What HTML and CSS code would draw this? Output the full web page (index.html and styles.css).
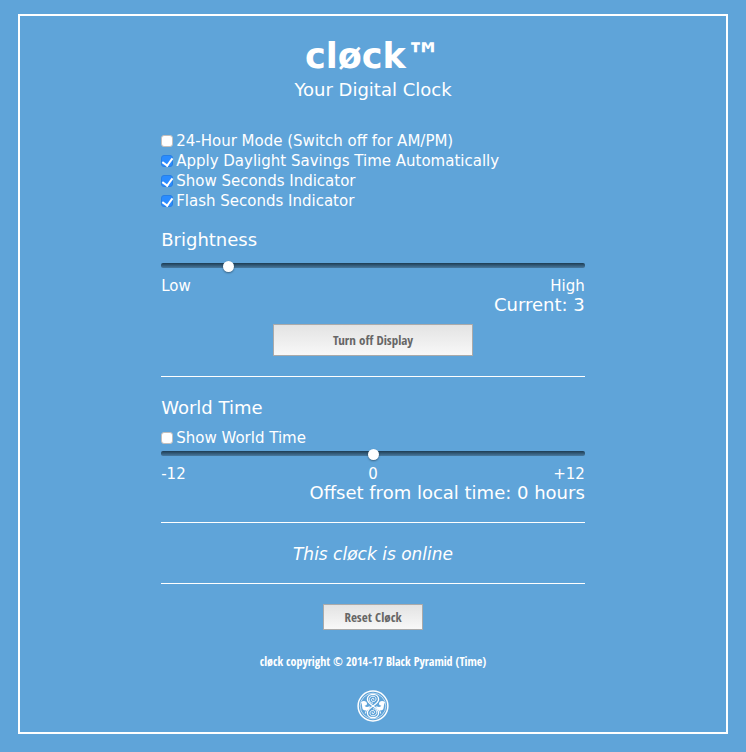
FILE: index.html
```html
<!DOCTYPE html>
<html lang="en">
<head>
<meta charset="utf-8">
<meta name="viewport" content="width=device-width, initial-scale=1">
<title>cløck</title>
<link rel="stylesheet" href="styles.css">
</head>
<body>
<main class="frame">
  <div class="panel">
    <header class="header">
      <h1 class="title">cløck™</h1>
      <p class="subtitle">Your Digital Clock</p>
    </header>
    <section class="options">
      <label class="check"><input type="checkbox"><span>24-Hour Mode (Switch off for AM/PM)</span></label>
      <label class="check"><input type="checkbox" checked><span>Apply Daylight Savings Time Automatically</span></label>
      <label class="check"><input type="checkbox" checked><span>Show Seconds Indicator</span></label>
      <label class="check"><input type="checkbox" checked><span>Flash Seconds Indicator</span></label>
    </section>
    <section class="brightness">
      <label class="heading" for="brightness">Brightness</label>
      <input class="slider" id="brightness" type="range" min="0" max="20" value="3">
      <div class="scale"><span>Low</span><span></span><span>High</span></div>
      <p class="status">Current: 3</p>
      <button class="button button-wide" type="button">Turn off Display</button>
    </section>
    <section class="world">
      <h2 class="heading">World Time</h2>
      <label class="check"><input type="checkbox"><span>Show World Time</span></label>
      <input class="slider" type="range" min="-12" max="12" value="0" aria-label="Offset from local time">
      <div class="scale"><span>-12</span><span>0</span><span>+12</span></div>
      <p class="status">Offset from local time: 0 hours</p>
    </section>
    <p class="online">This cløck is online</p>
    <footer class="footer">
      <button class="button" type="button">Reset Cløck</button>
      <p class="copyright">cløck copyright © 2014-17 Black Pyramid (Time)</p>
      <svg class="seal" viewBox="0 0 32 32" aria-hidden="true">
        <circle cx="16" cy="16" r="14.9" stroke-width="1.5"/>
        <circle cx="16" cy="16" r="12.8" stroke-width=".6"/>
        <path d="M16 16C12.5 13.7 10.4 12 10.4 9.3C10.4 6.3 13 4.3 16 4.3C19 4.3 21.6 6.3 21.6 9.3C21.6 12 19.5 13.7 16 16C12.5 18.3 10.4 20 10.4 22.7C10.4 25.7 13 27.7 16 27.7C19 27.7 21.6 25.7 21.6 22.7C21.6 20 19.5 18.3 16 16Z" stroke-width="1.3"/>
        <g id="spiral">
          <path d="M16 13.2C10.8 13.2 11.2 6.2 16 6.2C20 6.2 20 11.6 16.2 11.5C13.8 11.4 14 8.3 16 8.3C17.2 8.3 17.2 9.8 16.2 9.8" stroke-width=".9"/>
        </g>
        <use href="#spiral" transform="rotate(180 16 16)"/>
        <g id="side">
          <path d="M4 12.2C6.5 9.8 9.8 11 10 13.6C10 15.1 8.8 15.9 7.8 15.3C7.8 17.4 10.8 17.6 12.8 15.8C12.6 19.6 8.6 21.7 6.3 19.8C4.6 18.3 5.6 14.4 4 12.2Z" class="solid"/>
          <path d="M8.3 23.6C8.6 20.7 10.8 18.8 13.5 17.2" stroke-width=".9"/>
        </g>
        <use href="#side" transform="matrix(-1 0 0 1 32 0)"/>
      </svg>
    </footer>
  </div>
</main>
</body>
</html>
```

FILE: styles.css
```css
* { box-sizing: border-box; }
body {
  margin: 14px 18px 18px;
  background: #5fa4d9;
  color: #fff;
  font: 15px/20px "DejaVu Sans", sans-serif;
}
h1, h2, p { margin: 0; font-weight: 400; }
.frame {
  border: 2px solid #fff;
  padding: 20px 0 10px;
}
.panel { width: 60%; margin: 0 auto; }
.header { text-align: center; }
.title { font-size: 35px; line-height: 40px; font-weight: 700; }
.subtitle { font-size: 18px; line-height: 28px; }
.options { margin-top: 27px; }
.check { display: flex; align-items: center; gap: 3px; }
.check input {
  appearance: none;
  display: grid;
  place-items: center;
  width: 12px;
  height: 12px;
  margin: 0;
  border: 1px solid #c4bfbc;
  border-radius: 3px;
  background: #fff;
}
.check input:checked { background: #2a8cff; border-color: #267fe6; }
.check input:checked::before {
  content: "";
  width: 5px;
  height: 8px;
  margin-bottom: 2px;
  border: solid #fff;
  border-width: 0 2px 2px 0;
  transform: rotate(36deg);
}
.brightness, .world { border-bottom: 1px solid #fff; padding-bottom: 20px; }
.brightness { margin-top: 18px; }
.heading { display: block; font-size: 18px; line-height: 22px; }
.slider {
  appearance: none;
  display: block;
  width: 100%;
  height: 10px;
  margin: 0;
  background: none;
}
.brightness .slider { margin-top: 9px; }
.slider::-webkit-slider-runnable-track {
  height: 5px;
  border-radius: 2px;
  background: linear-gradient(#1d3c53, #48799f);
}
.slider::-webkit-slider-thumb {
  appearance: none;
  width: 11px;
  height: 11px;
  margin-top: -2px;
  border-radius: 50%;
  background: #fff;
  box-shadow: 0 1px 2px #0006;
}
.scale {
  display: grid;
  grid-template-columns: 1fr 1fr 1fr;
  margin-top: 7px;
  line-height: 18px;
}
.scale :nth-child(2) { text-align: center; }
.scale :nth-child(3) { text-align: right; }
.status { text-align: right; font-size: 18px; line-height: 20px; }
.button {
  display: block;
  width: 100px;
  height: 26px;
  margin: 0 auto;
  padding: 0;
  border: 1px solid #aaa;
  background: linear-gradient(#e3e3e3, #f8f8f8);
  color: #666;
  font: 700 13px/20px "Liberation Sans Narrow", "Open Sans Condensed", "DejaVu Sans Condensed", sans-serif;
}
.button-wide { width: 200px; height: 32px; margin-top: 9px; }
.world { padding: 20px 0 19px; }
.world .check { margin-top: 9px; }
.online {
  padding: 21px 0 19px;
  border-bottom: 1px solid #fff;
  text-align: center;
  font-size: 17px;
  line-height: 20px;
  font-style: italic;
}
.footer { padding-top: 20px; }
.copyright {
  margin-top: 21px;
  text-align: center;
  font: 700 12px/22px "Liberation Sans Narrow", "Open Sans Condensed", "DejaVu Sans Condensed", sans-serif;
}
.seal {
  display: block;
  width: 32px;
  height: 32px;
  margin: 17px auto 0;
  fill: none;
  stroke: #fff;
}
.seal .solid { fill: #fff; stroke: none; }
```
